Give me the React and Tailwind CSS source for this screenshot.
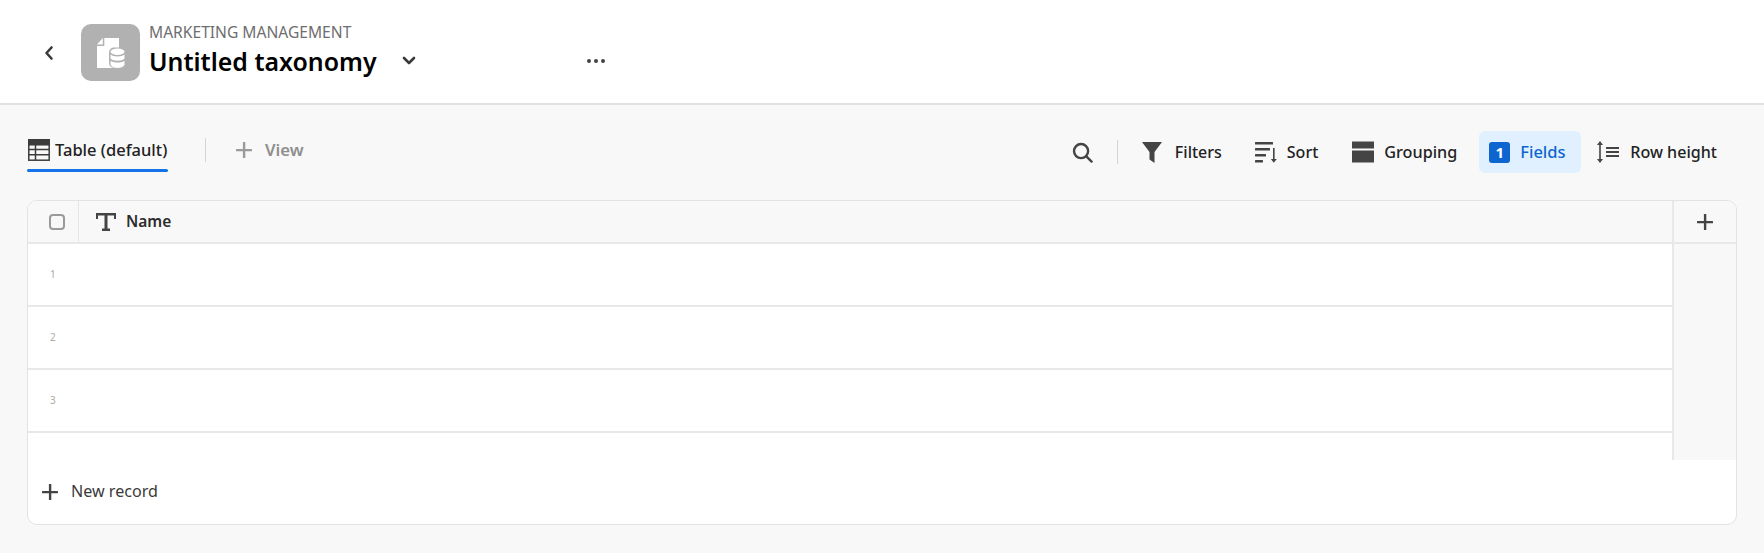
function Plus({ className, color = "#444444" }) {
  return (
    <svg viewBox="0 0 18 18" className={className} fill={color}>
      <rect x="7.900" y="1" width="2.400" height="16" rx="0.600" />
      <rect x="1" y="7.900" width="16" height="2.400" rx="0.600" />
    </svg>
  );
}

function Row({ n }) {
  return (
    <div className="flex h-[63px] border-b-2 border-[#e8e8e8]">
      <div className="w-[50px] pl-[22px] flex items-center justify-start text-[10px] text-[#b0a99f]">{n}</div>
    </div>
  );
}

export default function App() {
  return (
    <div className="w-[1764px] h-[553px] overflow-hidden bg-[#f8f8f8] font-['Noto_Sans','Open_Sans',sans-serif] text-[#1a1a1a]">
      <header className="h-[105px] bg-white border-b-2 border-[#e1e1e1] flex items-start">
        <button className="w-[16px] ml-[41px] mt-[45px] h-[16px] flex items-center justify-center">
          <svg viewBox="0 0 12 16" className="w-[12px] h-[16px]" fill="none" stroke="#3a3a3a" strokeWidth="2.600" strokeLinecap="round" strokeLinejoin="round">
            <path d="M8.500 2.500 3.500 8l5 5.500" />
          </svg>
        </button>
        <div className="ml-[24px] mt-[24px] w-[59px] h-[57px] rounded-[10px] bg-[#b1b1b1] flex items-center justify-center">
          <svg viewBox="0 0 28 30" className="w-[28px] h-[30px]" fill="#ffffff">
            <path d="M5.800 0 0 6.500h5.800z" />
            <path d="M7.300 0H22v30H0V8h7.300z" />
            <rect x="12" y="9.500" width="16" height="20.500" rx="5" fill="#b1b1b1" />
            <ellipse cx="20.500" cy="13.800" rx="7" ry="3.200" />
            <path d="M13.500 16.500c1.300 1.300 4 2 7 2s5.700-.7 7-2v4c-1.300 1.500-4 2.200-7 2.200s-5.700-.7-7-2.200z" />
            <path d="M13.500 22.800c1.300 1.200 4 1.800 7 1.800s5.700-.6 7-1.800V27c-1 1.800-4 3-7 3s-6-1.200-7-3z" />
          </svg>
        </div>
        <div className="ml-[9px] mt-[22px] flex flex-col">
          <div className="text-[15.600px] leading-[20px] text-[#6e6e6e]">MARKETING MANAGEMENT</div>
          <div className="flex items-center mt-[2px]">
            <span className="text-[24.900px] leading-[34px] font-semibold text-black">Untitled taxonomy</span>
            <svg viewBox="0 0 14 10" className="w-[14px] h-[10px] ml-[25px]" fill="none" stroke="#3a3a3a" strokeWidth="2.600" strokeLinecap="round" strokeLinejoin="round">
              <path d="M2 2l5 5 5-5" />
            </svg>
            <svg viewBox="0 0 20 6" className="w-[20px] h-[6px] ml-[170px]" fill="#444444">
              <circle cx="3" cy="3" r="2" /><circle cx="10" cy="3" r="2" /><circle cx="17" cy="3" r="2" />
            </svg>
          </div>
        </div>
      </header>

      <div className="h-[95px] flex items-start justify-between pl-[27px] pr-[47px]">
        <div className="flex items-start mt-[28px]">
          <div className="flex flex-col">
            <div className="flex items-center gap-[5px] h-[34px] pl-px">
              <svg viewBox="0 0 22 22" className="w-[22px] h-[22px]" fill="none" stroke="#3c3c3c" strokeWidth="1.500">
                <rect x="0.800" y="0.800" width="20.400" height="20.400" />
                <rect x="0.800" y="0.800" width="20.400" height="5" fill="#3c3c3c" />
                <path d="M0.800 10.500h20.400M0.800 15.800h20.400M7.500 5.800v15.400" />
              </svg>
              <span className="text-[16.500px] font-medium leading-[20px] text-[#222222]">Table (default)</span>
            </div>
            <div className="h-[3px] w-[141px] mt-[2px] rounded-sm bg-[#1473e6]" />
          </div>
          <div className="w-px h-[24px] bg-[#d4d4d4] ml-[37px] mt-[5px]" />
          <div className="flex items-center h-[34px] ml-[29px]">
            <Plus className="w-[18px] h-[18px]" color="#9a9a9a" />
            <span className="text-[16.700px] font-semibold text-[#8e8e8e] ml-[12px]">View</span>
          </div>
        </div>

        <div className="flex items-center mt-[26px] h-[42px]">
          <svg viewBox="0 0 22 22" className="w-[21px] h-[21px]" fill="none" stroke="#444444" strokeWidth="2.500" strokeLinecap="round">
            <circle cx="9.500" cy="9.500" r="7.400" />
            <path d="M15 15l5.500 5.500" />
          </svg>
          <div className="w-px h-[24px] bg-[#d4d4d4] ml-[24px]" />
          <svg viewBox="0 0 20 22" className="w-[20px] h-[22px] ml-[24px]" fill="#444444">
            <path d="M0 1h20L12.500 11v11l-5-3.500V11z" />
          </svg>
          <span className="text-[16px] font-medium text-[#222222] ml-[13px]">Filters</span>
          <svg viewBox="0 0 22 22" className="w-[22px] h-[22px] ml-[33px]" fill="#444444">
            <rect x="0" y="1" width="18" height="2.500" rx="0.500" />
            <rect x="0" y="7" width="15" height="2.500" rx="0.500" />
            <rect x="0" y="13" width="11" height="2.500" rx="0.500" />
            <rect x="0" y="19" width="8" height="2.500" rx="0.500" />
            <rect x="18" y="7" width="1.600" height="13" />
            <path d="M15.800 18h6L18.800 21.800z" />
          </svg>
          <span className="text-[16px] font-medium text-[#222222] ml-[10px]">Sort</span>
          <svg viewBox="0 0 22 22" className="w-[22px] h-[22px] ml-[34px]" fill="#444444">
            <rect x="0" y="0.500" width="22" height="7" />
            <rect x="0" y="9.500" width="22" height="12" />
          </svg>
          <span className="text-[16.200px] font-medium text-[#222222] ml-[10px]">Grouping</span>
          <div className="ml-[22px] w-[102px] h-[42px] rounded-[6px] bg-[#e0f0ff] flex items-center pl-[10px]">
            <div className="w-[21px] h-[21px] rounded-[3px] bg-[#0d66d0] text-white text-[15px] font-bold flex items-center justify-center">1</div>
            <span className="text-[16.500px] font-medium text-[#0d66d0] ml-[10px]">Fields</span>
          </div>
          <svg viewBox="0 0 24 22" className="w-[24px] h-[22px] ml-[15px]" fill="#444444">
            <rect x="3.200" y="3" width="1.600" height="16" />
            <path d="M4 0l3 4H1zM4 22l3-4H1z" />
            <rect x="10" y="6" width="13" height="2" />
            <rect x="10" y="10" width="13" height="2" />
            <rect x="10" y="14" width="13" height="2" />
          </svg>
          <span className="text-[16.100px] font-medium text-[#222222] ml-[10px]">Row height</span>
        </div>
      </div>

      <div className="ml-[27px] w-[1710px] h-[325px] rounded-[10px] border border-[#e3e3e3] bg-white overflow-hidden">
        <div className="flex h-[43px] border-b-2 border-[#e8e8e8] bg-[#f8f8f8]">
          <div className="w-[51px] border-r border-[#e6e6e6] flex items-center pl-[21px]">
            <div className="w-[16px] h-[16px] rounded-[4px] border-2 border-[#9a9a9a] bg-[#f8f8f8]" />
          </div>
          <div className="flex-1 flex items-center pl-[17px]">
            <svg viewBox="0 0 20 18" className="w-[20px] h-[18px]" fill="#444444">
              <path d="M0 0h20v6h-2V2.400h-6.500v13.200H14V18H6v-2.400h2.500V2.400H2V6H0z" />
            </svg>
            <span className="text-[15.500px] font-semibold text-[#2c2c2c] ml-[10px]">Name</span>
          </div>
          <div className="w-[64px] border-l-2 border-[#e8e8e8] flex items-center justify-center">
            <Plus className="w-[18px] h-[18px]" />
          </div>
        </div>
        <div className="flex h-[216px]">
          <div className="flex-1 flex flex-col">
            <Row n={1} />
            <Row n={2} />
            <Row n={3} />
          </div>
          <div className="w-[64px] bg-[#f8f8f8] border-l-2 border-[#e8e8e8]" />
        </div>
        <div className="flex items-center h-[63px] pl-[13px]">
          <Plus className="w-[18px] h-[18px]" />
          <span className="text-[16.100px] text-[#3a3a3a] ml-[12px]">New record</span>
        </div>
      </div>
    </div>
  );
}
